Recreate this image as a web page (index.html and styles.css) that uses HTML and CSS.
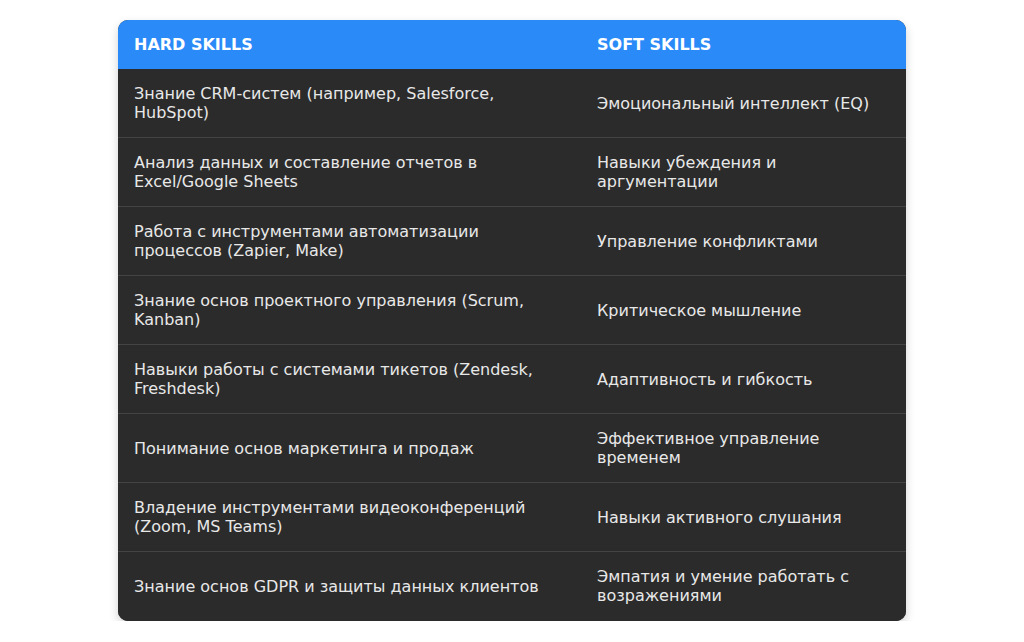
FILE: index.html
```html
<!DOCTYPE html>
<html lang="ru">
<head>
<meta charset="utf-8">
<link rel="stylesheet" href="styles.css">
</head>
<body>
<div class="wrap">
<table class="skills">
<thead>
<tr><th class="col-hard">HARD SKILLS</th><th class="col-soft">SOFT SKILLS</th></tr>
</thead>
<tbody>
<tr><td>Знание CRM-систем (например, Salesforce, HubSpot)</td><td>Эмоциональный интеллект (EQ)</td></tr>
<tr><td>Анализ данных и составление отчетов в Excel/Google Sheets</td><td>Навыки убеждения и аргументации</td></tr>
<tr><td>Работа с инструментами автоматизации процессов (Zapier, Make)</td><td>Управление конфликтами</td></tr>
<tr><td>Знание основ проектного управления (Scrum, Kanban)</td><td>Критическое мышление</td></tr>
<tr><td>Навыки работы с системами тикетов (Zendesk, Freshdesk)</td><td>Адаптивность и гибкость</td></tr>
<tr><td>Понимание основ маркетинга и продаж</td><td>Эффективное управление временем</td></tr>
<tr><td>Владение инструментами видеоконференций (Zoom, MS Teams)</td><td>Навыки активного слушания</td></tr>
<tr><td>Знание основ GDPR и защиты данных клиентов</td><td>Эмпатия и умение работать с возражениями</td></tr>
</tbody>
</table>
</div>
</body>
</html>
```
FILE: styles.css
```css
html, body {
  margin: 0;
  padding: 0;
  background: #ffffff;
}
body {
  font-family: "DejaVu Sans", sans-serif;
  font-size: 16px;
  line-height: 19px;
  color: #e8e8e8;
}
.wrap {
  width: 788px;
  margin: 20px auto 0;
  border-radius: 10px;
  overflow: hidden;
  box-shadow: 0 4px 10px rgba(0, 0, 0, 0.18);
  background: #2b2b2b;
}
.skills {
  width: 100%;
  border-collapse: collapse;
  table-layout: fixed;
}
.skills th {
  background: #2a8af8;
  color: #ffffff;
  font-weight: bold;
  text-align: left;
  padding: 15px 16px;
}
.col-hard { width: 431px; }
.skills td {
  padding: 15px 16px;
  vertical-align: middle;
  background: #2b2b2b;
  border-bottom: 1px solid #444444;
}
.skills tbody tr:last-child td {
  border-bottom-color: #2b2b2b;
}
```
